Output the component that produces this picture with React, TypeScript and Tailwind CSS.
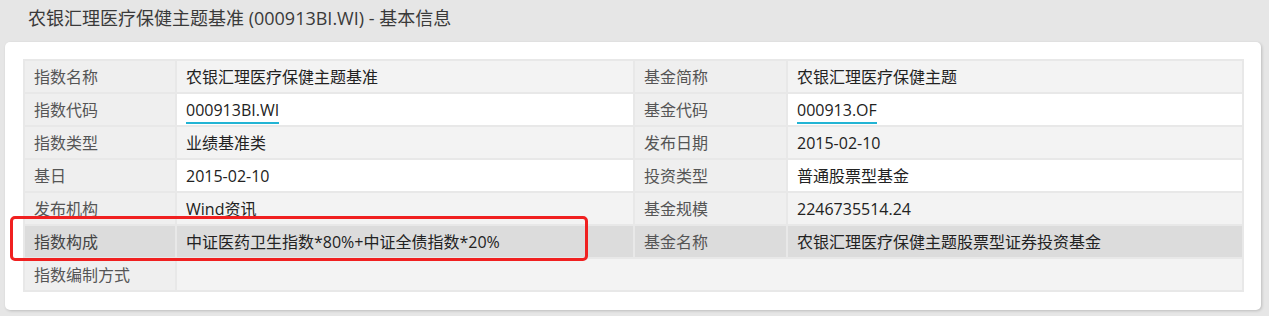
import React from "react";

type Cell = { label: string; value: string; link?: boolean };

const rows: [Cell, Cell | null][] = [
  [{ label: "指数名称", value: "农银汇理医疗保健主题基准" }, { label: "基金简称", value: "农银汇理医疗保健主题" }],
  [{ label: "指数代码", value: "000913BI.WI", link: true }, { label: "基金代码", value: "000913.OF", link: true }],
  [{ label: "指数类型", value: "业绩基准类" }, { label: "发布日期", value: "2015-02-10" }],
  [{ label: "基日", value: "2015-02-10" }, { label: "投资类型", value: "普通股票型基金" }],
  [{ label: "发布机构", value: "Wind资讯" }, { label: "基金规模", value: "2246735514.24" }],
  [{ label: "指数构成", value: "中证医药卫生指数*80%+中证全债指数*20%" }, { label: "基金名称", value: "农银汇理医疗保健主题股票型证券投资基金" }],
  [{ label: "指数编制方式", value: "" }, null],
];

function Value({ cell }: { cell: Cell }) {
  if (cell.link) {
    return <span className="border-b-2 border-[#22b4d4] pb-[1px] cursor-pointer">{cell.value}</span>;
  }
  return <span>{cell.value}</span>;
}

export default function App() {
  return (
    <div
      className="w-[1269px] h-[316px] bg-[#e6e6e6] text-[#333] overflow-hidden"
      style={{ fontFamily: '"Open Sans", "Noto Sans CJK SC", sans-serif' }}
    >
      <div className="h-[42px] pl-[28px] pt-[4px] text-[18px] leading-[28px] text-[#3a3a3a]">
        农银汇理医疗保健主题基准 (000913BI.WI) - 基本信息
      </div>
      <div className="relative ml-[5px] w-[1256px] h-[268px] bg-white rounded-[5px] shadow-[1px_1px_3px_rgba(0,0,0,0.18)] pt-[17px] pl-[18px]">
        <table className="border-collapse text-[16px] w-[1221px] table-fixed">
          <colgroup>
            <col className="w-[152px]" />
            <col className="w-[458px]" />
            <col className="w-[153px]" />
            <col />
          </colgroup>
          <tbody>
            {rows.map(([a, b], i) => {
              const hl = i === 5;
              const odd = i % 2 === 0;
              const labelBg = hl ? "bg-[#dcdcdc]" : "bg-[#efefef]";
              const valBg = hl ? "bg-[#dcdcdc]" : odd ? "bg-[#f3f3f3]" : "bg-white";
              return (
                <tr key={i} className="h-[33px]">
                  <td className={`${labelBg} border-2 border-[#e8e8e8] pl-[9px] ${hl ? "text-[#444]" : "text-[#555]"}`}>{a.label}</td>
                  <td colSpan={b ? 1 : 3} className={`${valBg} border-2 border-[#e8e8e8] pl-[9px] text-[#222]`}><Value cell={a} /></td>
                  {b && (
                    <>
                      <td className={`${labelBg} border-2 border-[#e8e8e8] pl-[9px] text-[#555]`}>{b.label}</td>
                      <td className={`${valBg} border-2 border-[#e8e8e8] pl-[9px] text-[#222]`}><Value cell={b} /></td>
                    </>
                  )}
                </tr>
              );
            })}
          </tbody>
        </table>
        <div className="absolute left-[5px] top-[174px] w-[578px] h-[45px] border-[3px] border-[#f02020] rounded-[5px] pointer-events-none" />
      </div>
    </div>
  );
}
